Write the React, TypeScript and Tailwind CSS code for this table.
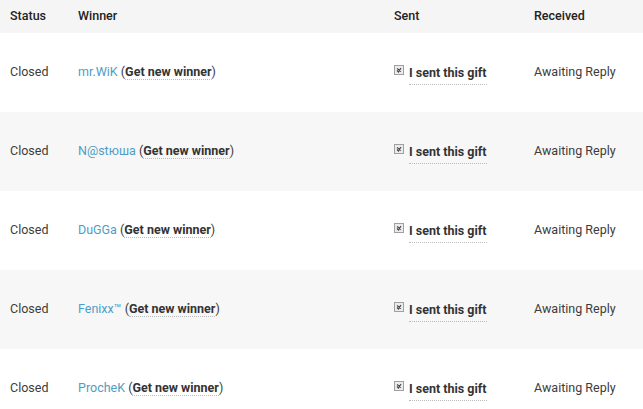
import React from "react";

const rows = [
    { name: "mr.WiK" },
    { name: "N@stюша" },
    { name: "DuGGa" },
    { name: "Fenixx™" },
    { name: "ProcheK" },
];

function CheckBox() {
    return (
        <span className="inline-flex items-center justify-center w-[10px] h-[10px] border border-[#a0a0a0] bg-[#ececec] mr-[5px] -mt-[6px]">
            <svg width="6" height="6" viewBox="0 0 6 6">
                <path d="M1 1.5 L5 4.5 M1 3.5 L2.5 5 L5 1" stroke="#444" strokeWidth="1.1" fill="none" />
            </svg>
        </span>
    );
}

export default function App() {
    return (
        <div
            className="w-[643px] h-[409px] overflow-hidden bg-white text-[12.5px] text-[#3c3c3c]"
            style={{ fontFamily: "Roboto, 'Liberation Sans', sans-serif" }}
        >
            <div className="grid grid-cols-[68px_316px_140px_1fr] pl-[10px] h-[33px] items-center bg-[#f5f5f5] font-medium text-[#222]">
                <span>Status</span>
                <span>Winner</span>
                <span>Sent</span>
                <span>Received</span>
            </div>
            {rows.map((r, i) => (
                <div
                    key={i}
                    className={
                        "grid grid-cols-[68px_316px_140px_1fr] pl-[10px] h-[79px] items-center " +
                        (i % 2 === 1 ? "bg-[#f7f7f7]" : "bg-white")
                    }
                >
                    <span>Closed</span>
                    <span>
                        <span className="text-[#4d9dc6]">{r.name}</span>{" "}
                        (<span className="font-bold text-[#333] border-b border-dotted border-[#bbb]">Get new winner</span>)
                    </span>
                    <span className="flex items-center">
                        <CheckBox />
                        <span className="font-bold text-[12.5px] text-[#333] border-b border-dotted border-[#bbb] pb-[2px] mt-[4px]">
                            I sent this gift
                        </span>
                    </span>
                    <span>Awaiting Reply</span>
                </div>
            ))}
        </div>
    );
}
